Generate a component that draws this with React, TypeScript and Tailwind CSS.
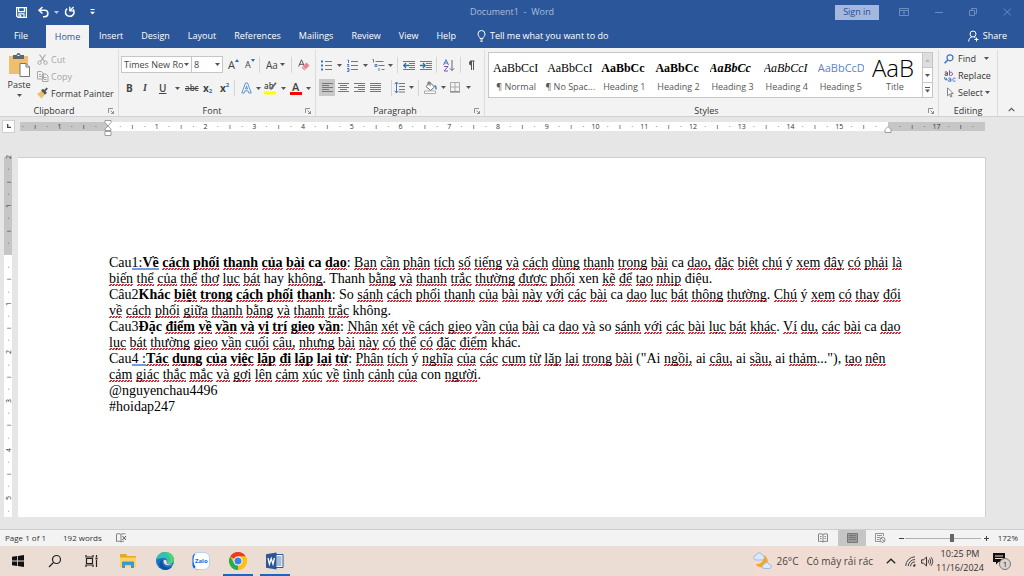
import type { ReactNode } from 'react'
import clsx from 'clsx'

const UI_FONT = "font-['Open_Sans','Noto_Sans',sans-serif]"

/* ---------- small drawing helpers ---------- */

interface IconProps {
  w?: number
  h?: number
  className?: string
  children: ReactNode
}

function Svg({ w = 14, h = 14, className, children }: IconProps) {
  return (
    <svg width={w} height={h} viewBox={`0 0 ${w} ${h}`} fill="none" aria-hidden="true" className={clsx('shrink-0 overflow-visible', className)}>
      {children}
    </svg>
  )
}

function Caret({ className = 'text-[#555]' }: { className?: string }) {
  return (
    <Svg w={5} h={3} className={className}>
      <path d="M0 0h5L2.5 3z" fill="currentColor" />
    </Svg>
  )
}

function Divider() {
  return <span className="h-4 w-px shrink-0 bg-[#d5d5d5]" />
}

/* ---------- title bar and tabs ---------- */

function TitleBar() {
  return (
    <header className="flex h-6 items-center text-white">
      <div className="flex flex-1 items-center">
        <button type="button" aria-label="Save" className="ml-4 w-5">
          <Svg w={11} h={11}>
            <path d="M.6.6h9.8v9.8H2L.6 9z" stroke="currentColor" strokeWidth="1.2" />
            <path d="M2.6 1v3.6h5.8V1M3 10V6.8h5V10M4.6 8v2" stroke="currentColor" strokeWidth="1.2" />
          </Svg>
        </button>
        <button type="button" aria-label="Undo" className="ml-[2px] flex items-center gap-1">
          <Svg w={12} h={12}>
            <path d="M4.5 1 1 4.3l3.5 3.2M1.4 4.3h5.3a3.2 3.2 0 0 1 0 6.4H5" stroke="currentColor" strokeWidth="1.5" />
          </Svg>
          <Caret className="text-[#b8c8e4]" />
        </button>
        <button type="button" aria-label="Repeat" className="ml-[5px]">
          <Svg w={12} h={12}>
            <path d="M3.2 2.6A4.3 4.3 0 1 0 9 3.2" stroke="currentColor" strokeWidth="1.5" />
            <path d="M5.800.8v4h4.400M6.200 4.400 9.600 1" stroke="currentColor" strokeWidth="1.300" />
          </Svg>
        </button>
        <button type="button" aria-label="Customize Quick Access Toolbar" className="ml-[14px]">
          <Svg w={5} h={6}>
            <path d="M.5.5h4" stroke="currentColor" />
            <path d="M0 2.8h5L2.5 5.6z" fill="currentColor" />
          </Svg>
        </button>
      </div>
      <h1 className="text-[9px] whitespace-pre text-[#a9bcdd]">Document1  -  Word</h1>
      <div className="flex flex-1 items-center justify-end text-[#6d8dc2]">
        <button type="button" className="mr-5 h-[15px] w-11 bg-[#a3b8dc] text-[9px] leading-[14px] text-[#1f4e95]">Sign in</button>
        <button type="button" aria-label="Ribbon Display Options" className="w-9">
          <Svg w={10} h={8}>
            <path d="M.5.5h9v7h-9zM.5 2.5h9M5 6.5V3.8M3.7 5 5 3.7 6.3 5" stroke="currentColor" />
          </Svg>
        </button>
        <button type="button" aria-label="Minimize" className="w-[34px]">
          <Svg w={8} h={8}><path d="M0 4.5h8" stroke="currentColor" /></Svg>
        </button>
        <button type="button" aria-label="Restore" className="w-[34px]">
          <Svg w={8} h={8}><path d="M.5 2.5h5v5h-5zM2.5 2.5v-2h5v5h-2" stroke="currentColor" /></Svg>
        </button>
        <button type="button" aria-label="Close" className="mr-3">
          <Svg w={9} h={8}><path d="m.8.5 7 7m0-7-7 7" stroke="currentColor" /></Svg>
        </button>
      </div>
    </header>
  )
}

const tabs = ['Insert', 'Design', 'Layout', 'References', 'Mailings', 'Review', 'View', 'Help']

function TabBar() {
  return (
    <nav className="flex h-6 items-stretch text-[9px] font-medium whitespace-nowrap text-white">
      <button type="button" className="w-[46px] pr-1">File</button>
      <button type="button" className="mt-px mr-px w-[43px] bg-[#f3f3f3] text-[#2b579a]">Home</button>
      {tabs.map((tab) => (
        <button type="button" key={tab} className="px-[9px]">{tab}</button>
      ))}
      <button type="button" className="flex items-center gap-1 pl-3">
        <Svg w={9} h={12}>
          <path d="M3 8.500C3 7 1 6.200 1 4a3.500 3.500 0 0 1 7 0c0 2.200-2 3-2 4.500zM3.200 10h2.600M3.600 11.500h1.800" stroke="currentColor" />
        </Svg>
        Tell me what you want to do
      </button>
      <button type="button" className="mr-[17px] ml-auto flex items-center gap-1">
        <Svg w={11} h={12}>
          <circle cx="5" cy="4" r="3" stroke="currentColor" />
          <path d="M.6 11.500C.8 8.500 2.500 7.300 4 6.800M6 6.800l1.500 1.200M8.500 7.500v4M6.500 9.500h4" stroke="currentColor" />
        </Svg>
        Share
      </button>
    </nav>
  )
}

/* ---------- ribbon ---------- */

interface GroupProps {
  label: string
  launcher?: boolean
  className?: string
  children: ReactNode
}

function Group({ label, launcher = true, className, children }: GroupProps) {
  return (
    <section aria-label={label} className={clsx('mt-[2px] flex flex-col border-r border-[#dcdcdc]', className)}>
      <div className="flex-1">{children}</div>
      <div className="flex h-[11px] items-center text-[9px] leading-[11px] text-[#333]">
        <span className="flex-1 text-center">{label}</span>
        {launcher && (
          <button type="button" aria-label={`${label} settings`} className="mr-1">
            <Svg w={6} h={6}><path d="M.5 5V.5H5M2.500 2.500l3 3M5.500 3v2.500H3" stroke="#777" strokeWidth=".8" /></Svg>
          </button>
        )}
      </div>
    </section>
  )
}

function ClipboardGroup() {
  return (
    <Group label="Clipboard" className="w-[119px]">
      <div className="flex pt-px pl-[7px]">
        <button type="button" className="flex w-6 flex-col items-center pt-[2px] text-[9px] leading-3 text-[#333]">
          <Svg w={22} h={24}>
            <path d="M1 3h19v18H1z" fill="#eebf6c" />
            <path d="M5 2h3.500a2 2 0 0 1 4 0H16v4H5z" fill="#5c6670" />
            <path d="M9.500 2.500h2" stroke="#fff" />
            <path d="M12 10.500h6l3.500 3.500v9.500H12z" fill="#fff" stroke="#777" />
            <path d="M18 10.500V14h3.500" stroke="#777" />
          </Svg>
          <span className="pt-[2px]">Paste</span>
          <span className="pt-[3px]"><Caret /></span>
        </button>
        <div className="ml-[6px] flex flex-col text-[9px] leading-[17px] text-[#a8a8a8]">
          <button type="button" disabled className="flex items-center gap-[3px]">
            <Svg w={11} h={11}>
              <path d="m2.500.5 5 7M8.500.5l-5 7" stroke="currentColor" strokeWidth="1.200" />
              <circle cx="2.500" cy="8.700" r="1.700" stroke="currentColor" />
              <circle cx="8.500" cy="8.700" r="1.700" stroke="currentColor" />
            </Svg>
            Cut
          </button>
          <button type="button" disabled className="flex items-center gap-[2px]">
            <Svg w={12} h={11}>
              <path d="M.5.5h4l2 2v5.500h-6zM2 3.500h2M2 5.500h3M5.500 3h3.500l2 2v5.500H5.500z" fill="#f3f3f3" stroke="currentColor" />
              <path d="M7 6.500h2.500M7 8.500h2.500" stroke="currentColor" />
            </Svg>
            Copy
          </button>
          <button type="button" className="flex items-center gap-[3px] whitespace-nowrap text-[#333]">
            <Svg w={11} h={11}>
              <path d="m0 6 4.500-3L8 6.500 4.500 10.500z" fill="#eebf6c" />
              <path d="m4 2.500 2-1.700 4 4-2 2z" fill="#555" />
              <path d="m7.500 3 2.800-2.800" stroke="#555" strokeWidth="1.800" />
            </Svg>
            Format Painter
          </button>
        </div>
      </div>
    </Group>
  )
}

function Combo({ label, value, className }: { label: string; value: string; className: string }) {
  return (
    <div className={clsx('relative h-[17px] border border-[#c6c6c6] bg-white', className)}>
      <select aria-label={label} defaultValue={value} className="block h-full w-full appearance-none pl-[2px] text-[9px] leading-[14px] text-[#444] outline-none">
        <option>{value}</option>
      </select>
      <span className="pointer-events-none absolute top-[6px] right-[2px]"><Caret /></span>
    </div>
  )
}

function FontGroup() {
  return (
    <Group label="Font" className="w-[197px]">
      <div className="flex items-center pt-[6px] pl-[2px] text-[#444]">
        <Combo label="Font" value="Times New Ro" className="w-[71px]" />
        <Combo label="Font size" value="8" className="-ml-px w-8" />
        <button type="button" aria-label="Increase font size" className="ml-[5px] flex w-[17px] text-[11px] leading-3">
          A<Svg w={4} h={3}><path d="M0 3h4L2 0z" fill="#2b6cb0" /></Svg>
        </button>
        <button type="button" aria-label="Decrease font size" className="flex w-[14px] text-[9px] leading-3">
          A<Svg w={4} h={3}><path d="M0 0h4L2 3z" fill="#2b6cb0" /></Svg>
        </button>
        <Divider />
        <button type="button" aria-label="Change case" className="ml-[6px] flex w-[25px] items-center gap-[2px] text-[10px] leading-3">
          Aa<Caret />
        </button>
        <Divider />
        <button type="button" aria-label="Clear formatting" className="ml-[6px]">
          <Svg w={12} h={12}>
            <path d="M.6 7.500 3.500.8 6 6.500M1.600 5.300h3.600" stroke="#555" />
            <path d="m3.500 8.500 5-5 3 3-5 5z" fill="#e88493" />
            <path d="m4.500 7.500 3 3" stroke="#fff" strokeWidth=".8" />
          </Svg>
        </button>
      </div>
      <div className="flex items-center pt-[7px] pl-[7px] text-[10px] leading-[14px] text-[#444]">
        <button type="button" aria-label="Bold" className="w-[17px] text-left font-bold">B</button>
        <button type="button" aria-label="Italic" className="w-4 text-left font-['Liberation_Serif',serif] font-bold italic">I</button>
        <button type="button" aria-label="Underline" className="flex w-[21px] items-center justify-between font-semibold underline">
          U<Caret />
        </button>
        <button type="button" aria-label="Strikethrough" className="ml-[5px] w-[18px] text-left text-[8px] font-semibold line-through">abc</button>
        <button type="button" aria-label="Subscript" className="flex w-[17px] items-end text-left font-bold">
          x<span className="text-[6px] leading-[8px] text-[#2b6cb0]">2</span>
        </button>
        <button type="button" aria-label="Superscript" className="flex w-[14px] items-start text-left font-bold">
          x<span className="text-[6px] leading-[8px] text-[#2b6cb0]">2</span>
        </button>
        <Divider />
        <button type="button" aria-label="Text effects" className="ml-[6px] flex w-[23px] items-center gap-1">
          <Svg w={11} h={12}>
            <path d="M.8 11 4.500 1h2l3.700 10H7.800l-.7-2.200H3.900L3.200 11zM4.500 7h2L5.500 3.800z" fill="#fff" stroke="#4a86cf" strokeWidth=".9" />
          </Svg>
          <Caret />
        </button>
        <button type="button" aria-label="Text highlight color" className="flex w-[26px] items-center gap-1">
          <Svg w={13} h={13}>
            <text x="0" y="7" fontSize="8" fontWeight="600" fill="#444" fontFamily="Open Sans">ab</text>
            <path d="m12 .8-5.500 6.700" stroke="#666" strokeWidth="1.800" />
            <path d="M0 9.500h12v3H0z" fill="#ffff00" />
          </Svg>
          <Caret />
        </button>
        <button type="button" aria-label="Font color" className="flex items-center gap-1">
          <Svg w={12} h={13}>
            <text x="2" y="9" fontSize="11" fontWeight="600" fill="#444" fontFamily="Open Sans">A</text>
            <path d="M0 10h12v3H0z" fill="#ff0000" />
          </Svg>
          <Caret />
        </button>
      </div>
    </Group>
  )
}

const alignments = [
  { label: 'Align left', d: 'M0 1.500h11M0 3.500h7M0 5.500h11M0 7.500h7M0 9.500h11' },
  { label: 'Center', d: 'M0 1.500h11M2 3.500h7M0 5.500h11M2 7.500h7M0 9.500h11' },
  { label: 'Align right', d: 'M0 1.500h11M4 3.500h7M0 5.500h11M4 7.500h7M0 9.500h11' },
  { label: 'Justify', d: 'M0 1.500h11M0 3.500h11M0 5.500h11M0 7.500h11M0 9.500h11' },
]

function ParagraphGroup() {
  return (
    <Group label="Paragraph" className="w-[169px]">
      <div className="flex items-center pt-[7px] pl-[5px]">
        <button type="button" aria-label="Bullets" className="flex w-[26px] items-center gap-1">
          <Svg w={12} h={13}>
            <path d="M4 2.500h7M4 6.500h7M4 10.500h7" stroke="#777" />
            <path d="M0 1.500h2v2H0zM0 5.500h2v2H0zM0 9.500h2v2H0z" fill="#3f76bb" />
          </Svg>
          <Caret />
        </button>
        <button type="button" aria-label="Numbering" className="flex w-[25px] items-center gap-1">
          <Svg w={12} h={13}>
            <path d="M4 2.500h7M4 6.500h7M4 10.500h7" stroke="#777" />
            <path d="M.5 1h1v3M0 5.500h2L.5 7.500h1.800M0 9.500h2v3H0M.5 11h1.500" stroke="#3f76bb" strokeWidth=".9" />
          </Svg>
          <Caret />
        </button>
        <button type="button" aria-label="Multilevel list" className="flex w-[25px] items-center gap-[2px]">
          <Svg w={14} h={13}>
            <path d="M3.500 2.500h8M6.500 6.500h6M9.500 10.500h3" stroke="#777" />
            <path d="M.5.5h1v3M3 5.500h2v2H3zM7 9v3" stroke="#3f76bb" strokeWidth=".9" />
          </Svg>
          <Caret />
        </button>
        <Divider />
        <button type="button" aria-label="Decrease indent" className="ml-[5px] w-[17px]">
          <Svg w={12} h={11}>
            <path d="M0 1.500h12M6 3.500h6M6 5.500h6M6 7.500h6M0 9.500h12" stroke="#777" />
            <path d="M1 5.500h5M3 3 .8 5.500 3 8" stroke="#2b6cb0" strokeWidth="1.300" />
          </Svg>
        </button>
        <button type="button" aria-label="Increase indent" className="w-4">
          <Svg w={12} h={11}>
            <path d="M0 1.500h12M6 3.500h6M6 5.500h6M6 7.500h6M0 9.500h12" stroke="#777" />
            <path d="M0 5.500h5M3 3l2.200 2.500L3 8" stroke="#2b6cb0" strokeWidth="1.300" />
          </Svg>
        </button>
        <Divider />
        <button type="button" aria-label="Sort" className="ml-[6px] w-[17px]">
          <Svg w={12} h={13}>
            <path d="M.5 6 3 .7 5.500 6M1.300 4h3.400" stroke="#3f76bb" />
            <path d="M1 7.500h4l-4 4.500h4" stroke="#8e4fa8" />
            <path d="M9 1v10.500M6.800 9.300 9 11.500l2.200-2.200" stroke="#666" />
          </Svg>
        </button>
        <Divider />
        <button type="button" aria-label="Show paragraph marks" className="ml-[6px]">
          <Svg w={8} h={11}>
            <path d="M3.500 1h4M4.500 1v9M6.500 1v9" stroke="#555" />
            <path d="M4.500.5a2.500 2.500 0 0 0 0 5z" fill="#555" />
          </Svg>
        </button>
      </div>
      <div className="flex items-center pt-[6px] pl-[3px]">
        {alignments.map(({ label, d }, i) => (
          <button type="button" key={label} aria-label={label} className={clsx('flex h-[17px] w-4 items-center justify-center', i === 0 && 'bg-[#c8c8c8]')}>
            <Svg w={11} h={11}><path d={d} stroke="#777" /></Svg>
          </button>
        ))}
        <span className="w-2" />
        <Divider />
        <button type="button" aria-label="Line spacing" className="ml-[2px] flex w-6 items-center gap-[3px]">
          <Svg w={12} h={13}>
            <path d="M5 2.500h6M5 5.500h6M5 8.500h6M5 11h6" stroke="#777" />
            <path d="M2.500 1v11M.6 3.200 2.500 1l1.900 2.200M.6 9.800 2.500 12l1.900-2.200" stroke="#3f76bb" />
          </Svg>
          <Caret />
        </button>
        <Divider />
        <button type="button" aria-label="Shading" className="ml-[5px] flex w-[26px] items-center gap-1">
          <Svg w={13} h={13}>
            <path d="m2 5.500 4-4 4.500 4.500-4 3.500z" fill="#fff" stroke="#666" />
            <path d="M4 4V1.200h2V5" stroke="#666" />
            <path d="M10.500 4.500c1.500.5 1.800 2 1.500 4" stroke="#3f76bb" strokeWidth="1.300" />
            <path d="M.5 10h11v2.500H.5z" fill="#fff" stroke="#999" strokeWidth=".8" />
          </Svg>
          <Caret />
        </button>
        <button type="button" aria-label="Borders" className="flex items-center gap-[6px]">
          <Svg w={10} h={11}>
            <path d="M.5.5h9v9h-9zM5 .5v9M.5 5h9" stroke="#aaa" />
            <path d="M0 10h10" stroke="#777" />
          </Svg>
          <Caret />
        </button>
      </div>
    </Group>
  )
}

const textStyles = [
  { name: '¶ Normal', sample: 'AaBbCcI', look: "font-['Liberation_Serif',serif] text-[12px] text-black" },
  { name: '¶ No Spac...', sample: 'AaBbCcI', look: "font-['Liberation_Serif',serif] text-[12px] text-black" },
  { name: 'Heading 1', sample: 'AaBbCc', look: "font-['Liberation_Serif',serif] text-[12px] font-bold text-black" },
  { name: 'Heading 2', sample: 'AaBbCc', look: "font-['Liberation_Serif',serif] text-[12px] font-bold text-black" },
  { name: 'Heading 3', sample: 'AaBbCc', look: "font-['Liberation_Serif',serif] text-[12px] font-bold italic text-black" },
  { name: 'Heading 4', sample: 'AaBbCcI', look: "font-['Liberation_Serif',serif] text-[12px] italic text-black" },
  { name: 'Heading 5', sample: 'AaBbCcD', look: 'text-[11px] text-[#5b83cb]' },
  { name: 'Title', sample: 'AaB', look: 'font-light text-[24px] text-black' },
]

function StylesGroup() {
  return (
    <Group label="Styles" className="min-w-0 flex-1">
      <div className="mt-[2px] mr-[5px] ml-[3px] flex h-[46px] border border-[#c6c6c6] bg-white">
        <div className="grid min-w-0 flex-1 grid-cols-8">
          {textStyles.map(({ name, sample, look }) => (
            <button type="button" key={name} className="flex min-w-0 flex-col items-center px-1 pt-[3px]">
              <span className={clsx('flex h-6 w-full items-center justify-start overflow-hidden leading-6 whitespace-nowrap', look)}>{sample}</span>
              <span className="text-[9px] leading-[14px] whitespace-nowrap text-[#555]">{name}</span>
            </button>
          ))}
        </div>
        <div className="flex w-[10px] flex-col divide-y divide-[#c6c6c6] border-l border-[#c6c6c6]">
          <button type="button" aria-label="Previous styles" className="flex flex-1 items-center justify-center bg-[#dedede]">
            <Svg w={5} h={3}><path d="M0 3h5L2.500 0z" fill="#bbb" /></Svg>
          </button>
          <button type="button" aria-label="Next styles" className="flex flex-1 items-center justify-center"><Caret /></button>
          <button type="button" aria-label="More styles" className="flex flex-1 items-center justify-center">
            <Svg w={5} h={6}>
              <path d="M0 .5h5" stroke="#555" />
              <path d="M0 2.500h5L2.500 5.500z" fill="#555" />
            </Svg>
          </button>
        </div>
      </div>
    </Group>
  )
}

function EditingGroup() {
  return (
    <Group label="Editing" launcher={false} className="w-[59px] shrink-0">
      <div className="flex flex-col pl-[5px] text-[9px] leading-[17px] text-[#333]">
        <button type="button" className="flex items-center gap-1">
          <Svg w={10} h={10}>
            <circle cx="6" cy="3.800" r="3" stroke="#3f76bb" strokeWidth="1.200" />
            <path d="M3.800 6 .6 9.300" stroke="#3f76bb" strokeWidth="1.600" />
          </Svg>
          Find
          <span className="pl-1"><Caret /></span>
        </button>
        <button type="button" className="flex items-center gap-[2px]">
          <Svg w={12} h={12}>
            <g strokeWidth="1">
              <path d="M.8 2.300c1.500-.8 2.700-.3 2.700.8v2.400M3.500 3.800C2 3.500.8 4 .8 4.700s1.500 1.200 2.700 0" stroke="#444" />
              <path d="M5.500.3v5.200M5.500 3c1-1.300 3-.9 3 .9S6.500 6 5.500 4.800" stroke="#8e4fa8" />
              <path d="M4.300 8.300c1.400-.8 2.600-.3 2.600.7v2.500M6.900 9.800c-1.400-.3-2.600.2-2.600.9s1.400 1.100 2.600 0M11.500 8.500c-1.200-.9-2.700-.2-2.700 1.200s1.500 2.200 2.700 1.200" stroke="#3f76bb" />
              <path d="M.8 7v2.300h2.200M2 8.200l1.200 1.100L2 10.500" stroke="#3f76bb" />
            </g>
          </Svg>
          Replace
        </button>
        <button type="button" className="flex items-center gap-[2px]">
          <Svg w={12} h={11}>
            <path d="M3.500.8v8l2-1.800 1.300 3 1.200-.6L6.700 6.600h2.500z" fill="#fff" stroke="#777" strokeWidth=".9" />
          </Svg>
          Select
          <Caret />
        </button>
      </div>
    </Group>
  )
}

function Ribbon() {
  return (
    <div className="flex h-[69px] border-b border-[#d2d2d2] bg-[#f3f3f3]">
      <ClipboardGroup />
      <FontGroup />
      <ParagraphGroup />
      <StylesGroup />
      <EditingGroup />
      <button type="button" aria-label="Collapse the Ribbon" className="flex w-[26px] items-end justify-center pb-1">
        <Svg w={7} h={5}><path d="M.7 4.200 3.500 1.400l2.800 2.800" stroke="#555" strokeWidth="1.200" /></Svg>
      </button>
    </div>
  )
}

/* ---------- rulers ---------- */

const DOT = '·'
const BAR = 'ı'

// quarter-unit marks: dot, bar, dot, number
function marks(from: number, to: number) {
  const out: string[] = []
  for (let n = from; n <= to; n++) out.push(DOT, BAR, DOT, String(n))
  return out
}

function HMarks({ items, atEnd = true }: { items: string[]; atEnd?: boolean }) {
  return (
    <>
      {items.map((m, i) => (
        <span key={i} className={clsx('flex flex-1', atEnd ? 'justify-end' : 'justify-start')}>
          <span className="flex w-0 justify-center">{m}</span>
        </span>
      ))}
    </>
  )
}

function HorizontalRuler() {
  return (
    <div className="flex h-[18px] items-center pr-[39px] text-[7px] leading-[9px] font-medium text-[#333]">
      <button type="button" aria-label="Tab selector" className="mr-[5px] ml-[2px] flex size-[13px] items-center justify-center border border-[#cfcfcf] bg-[#fdfdfd]">
        <Svg w={4} h={4}><path d="M.7 0v3.300H4" stroke="#444" strokeWidth="1.300" /></Svg>
      </button>
      <div className="flex h-[9px] w-[88px] bg-[#c6c6c6] pl-[3px]">
        <HMarks items={[DOT, BAR, DOT, '1', DOT, BAR, DOT]} atEnd={false} />
      </div>
      <div className="relative flex h-[9px] flex-[780] bg-white">
        <HMarks items={[...marks(1, 15), DOT, BAR, DOT, '']} />
        <Svg w={8} h={16} className="absolute -top-[2px] -left-1">
          <path d="M1 .5h6v2L4 6 1 2.500zM4 6l3 3v1.500H1V9zM1 11.500h6v4H1z" fill="#fff" stroke="#888" strokeWidth=".8" />
        </Svg>
        <Svg w={8} h={7} className="absolute -right-1 -bottom-[2px]">
          <path d="m4 .5 3 3v3H1v-3z" fill="#fff" stroke="#888" strokeWidth=".8" />
        </Svg>
      </div>
      <div className="flex h-[9px] flex-[97] bg-[#c6c6c6]">
        <HMarks items={[DOT, BAR, DOT, '17', DOT, BAR, DOT, '']} />
      </div>
    </div>
  )
}

function VMarks({ items }: { items: string[] }) {
  return (
    <>
      {items.map((m, i) => (
        <span key={i} className="flex h-3 shrink-0 items-start justify-center">
          <span className="flex h-0 -rotate-90 items-center">{m}</span>
        </span>
      ))}
    </>
  )
}

function VerticalRuler() {
  return (
    <div className="ml-1 flex w-2 flex-col text-[7px] leading-[9px] font-medium text-[#333]">
      <div className="flex h-[98px] shrink-0 flex-col justify-between bg-[#c6c6c6]">
        <VMarks items={['2', DOT, BAR, DOT, '1', DOT, BAR, DOT]} />
      </div>
      <div className="min-h-0 flex-1 overflow-hidden bg-white">
        <div className="flex h-[292px] flex-col justify-between">
          <VMarks items={['', ...marks(1, 5), DOT, BAR, DOT]} />
        </div>
      </div>
    </div>
  )
}

/* ---------- document ---------- */

const SQUIGGLE =
  'bg-[conic-gradient(#e8202a_25%,transparent_0_50%,#e8202a_0_75%,transparent_0)] bg-[length:3px_2px] bg-bottom-left bg-repeat-x'

// Words are spell-check flagged unless they start with "^".
function Words({ text }: { text: string }) {
  return (
    <>
      {text.split(' ').map((token, i) => {
        const plain = token.startsWith('^')
        const tail = plain ? '' : (token.match(/\.+"?\)?,?$/)?.[0] ?? '')
        const word = plain ? token.slice(1) : token.slice(0, token.length - tail.length)
        return (
          <span key={i}>
            {i > 0 && ' '}
            {plain ? word : <span className={SQUIGGLE}>{word}</span>}
            {tail}
          </span>
        )
      })}
    </>
  )
}

function Grammar({ children }: { children: ReactNode }) {
  return (
    <span className="bg-[linear-gradient(#6f9be6,#6f9be6)] bg-[length:100%_2px] bg-bottom-left bg-no-repeat">
      {children}
    </span>
  )
}

function Document() {
  return (
    <article className="mr-[38px] ml-[6px] flex-1 overflow-hidden border-t border-r border-[#cfcfcf] bg-white pt-[97px] pl-[91px] font-['Liberation_Serif',serif] text-[14px] leading-4 whitespace-nowrap text-black">
      <p>
        Cau<Grammar>1:<b>Về</b></Grammar> <b><Words text="cách phối thanh của bài ^ca dao" /></b>: <Words text="Bạn cần phân tích số tiếng và cách dùng thanh trong bài ^ca dao, đặc biệt chú ^ý xem đây có phải là" />
        <br />
        <Words text="biến thể của thể thơ lục bát ^hay không. ^Thanh bằng và thanh trắc thường được phối ^xen kẽ để tạo nhịp ^điệu." />
      </p>
      <p>
        Câu2<b><Words text="^Khác biệt trong cách phối thanh" /></b>: <Words text="^So sánh cách phối thanh của bài này với các bài ^ca dao lục bát thông thường. Chú ^ý xem có thay đổi" />
        <br />
        <Words text="về cách phối giữa thanh bằng và thanh trắc ^không." />
      </p>
      <p>
        Cau3<b><Words text="^Đặc điểm về vần và vị trí gieo vần" /></b>: <Words text="Nhận xét về cách gieo vần của bài ^ca dao và ^so sánh với các bài lục bát khác. Ví dụ, các bài ^ca dao" />
        <br />
        <Words text="lục bát thường gieo vần cuối câu, nhưng bài này có thể có đặc điểm ^khác." />
      </p>
      <p>
        Cau<Grammar>4 :</Grammar><b><Words text="Tác dụng của việc lặp đi lặp lại từ" /></b>: <Words text={'Phân tích ^ý nghĩa của các cụm từ lặp lại trong bài ^("Ai ngồi, ^ai câu, ^ai sầu, ^ai thảm..."), tạo nên'} />
        <br />
        <Words text="cảm giác thắc mắc và gợi lên cảm xúc về tình cảnh của ^con người." />
      </p>
      <p>@nguyenchau4496</p>
      <p>#hoidap247</p>
    </article>
  )
}

/* ---------- status bar ---------- */

function StatusBar() {
  return (
    <footer className="flex h-[17px] items-center border-t border-[#cdcdcd] bg-[#f3f3f3] text-[8px] text-[#333]">
      <span className="pl-[5px]">Page 1 of 1</span>
      <span className="pl-[17px]">192 words</span>
      <button type="button" aria-label="Proofing errors" className="ml-[14px]">
        <Svg w={11} h={10}>
          <path d="M5 1.500C4 .5 2 .5.5 1v7.500c1.500-.5 3.500-.5 4.500.5zM5 1.500C6 .5 8 .5 9.500 1M5 9c1-.7 2-.9 3-.8" stroke="#666" strokeWidth=".8" />
          <path d="m6.500 3 3.500 4m0-4L6.500 7" stroke="#555" />
        </Svg>
      </button>
      <div className="ml-auto flex h-full items-center">
        <button type="button" aria-label="Read Mode" className="mr-[10px]">
          <Svg w={10} h={10}>
            <path d="M5 1.500C4 .7 2 .7.500 1v7.500c1.500-.3 3.500-.3 4.500.5 1-.8 3-.8 4.500-.5V1C8 .7 6 .7 5 1.500zM5 1.500V9M2 3.500h1.500M2 5.500h1.500M6.500 3.500H8M6.500 5.500H8" stroke="#777" strokeWidth=".9" />
          </Svg>
        </button>
        <button type="button" aria-label="Print Layout" className="flex h-full w-[28px] items-center justify-center bg-[#c6c6c6]">
          <Svg w={11} h={10}>
            <path d="M.5.5h10v9H.5z" fill="#999" stroke="#777" />
            <path d="M2 2.500h7M2 4.500h7M2 6.500h7" stroke="#777" />
          </Svg>
        </button>
        <button type="button" aria-label="Web Layout" className="mx-[9px]">
          <Svg w={11} h={10}>
            <path d="M5 8.500H.5v-8h8V3M2 2.500h5M2 4.500h3M2 6.500h2" stroke="#888" strokeWidth=".9" />
            <circle cx="7.500" cy="6.800" r="2.500" fill="#f3f3f3" stroke="#777" strokeWidth=".9" />
            <path d="m6 5 3.200 3.500" stroke="#777" strokeWidth=".8" />
          </Svg>
        </button>
        <button type="button" aria-label="Zoom out" className="mr-px ml-1"><Svg w={5} h={5}><path d="M0 2.500h5" stroke="#444" /></Svg></button>
        <input
          type="range"
          aria-label="Zoom"
          min={0}
          max={100}
          defaultValue={62}
          className="h-[9px] w-[76px] appearance-none bg-transparent bg-[linear-gradient(#b0b0b0,#b0b0b0)] bg-[length:100%_1px] bg-center bg-no-repeat [&::-webkit-slider-thumb]:h-[8px] [&::-webkit-slider-thumb]:w-1 [&::-webkit-slider-thumb]:appearance-none [&::-webkit-slider-thumb]:bg-[#666]"
        />
        <button type="button" aria-label="Zoom in" className="ml-[3px]"><Svg w={5} h={5}><path d="M0 2.500h5M2.500 0v5" stroke="#444" /></Svg></button>
        <button type="button" className="w-[35px] pr-[6px] text-right">172%</button>
      </div>
    </footer>
  )
}

/* ---------- taskbar ---------- */

const apps = [
  {
    name: 'Start',
    icon: (
      <Svg w={14} h={14}>
        <path d="M1 2.800 6 2v4.600H1zM6.800 1.900 13 1v5.600H6.800zM1 7.400h5V12l-5-.8zM6.800 7.400H13V13l-6.200-.9z" fill="#111" />
      </Svg>
    ),
  },
  {
    name: 'Search',
    icon: (
      <Svg w={14} h={14}>
        <circle cx="8.500" cy="5.500" r="4" stroke="#222" strokeWidth="1.200" />
        <path d="M5.600 8.400 1 13" stroke="#222" strokeWidth="1.300" />
      </Svg>
    ),
  },
  {
    name: 'Task View',
    icon: (
      <Svg w={14} h={14}>
        <path d="M1 1v2h7V1M1 13v-2h7v2M1.500 4.500h6v5h-6zM11.500 1v2M11.500 6v7" stroke="#222" strokeWidth="1.200" />
        <path d="M10.500 3.500h2v2h-2z" fill="#222" />
      </Svg>
    ),
  },
  {
    name: 'File Explorer',
    icon: (
      <Svg w={17} h={16}>
        <path d="M0 2a1 1 0 0 1 1-1h5l1.500 2H15a1 1 0 0 1 1 1v10H0z" fill="#e9a820" />
        <path d="M0 4.500h16V13a1 1 0 0 1-1 1H1a1 1 0 0 1-1-1z" fill="#fcd462" />
        <path d="M3 8.500h10a1 1 0 0 1 1 1V15h-3v-3H5v3H2V9.500a1 1 0 0 1 1-1z" fill="#3f95d8" />
      </Svg>
    ),
  },
  {
    name: 'Edge',
    icon: (
      <Svg w={18} h={18}>
        <circle cx="9" cy="9" r="9" fill="#1673c6" />
        <path d="M.3 7.500C1 3 4.700 0 9 0c5 0 9 3.500 9 7.800 0 2.500-2 4.200-4.500 4.200-1.800 0-3-.6-2.600-1.400 1.300-2.200-.4-4.600-3.400-4.600C4 6 1 6.800.3 7.500z" fill="#35c1b1" />
        <path d="M9 0c5 0 9 3.500 9 7.800 0 2.500-2 4.200-4.500 4.200-1.200 0-2.200-.3-2.500-.8 4-1 4.500-6.200-2-11.200z" fill="#5bd75a" opacity=".7" />
        <path d="M7 8c-2 3 .5 7.500 5 7.500 1.800 0 3.500-.6 4.500-1.600C15 16.500 12.300 18 9 18 5 18 3 14 3.500 11 4 8.800 5.500 8 7 8z" fill="#0c4fa0" />
        <path d="M7.800 8.300c-1 1.800.5 4.600 3.700 5 2 .2 4-.3 5-1-1.500.4-6.500.5-5.700-1.700C11.500 8.800 9 7 7.800 8.300z" fill="#ecddd5" />
      </Svg>
    ),
  },
  {
    name: 'Zalo',
    icon: (
      <Svg w={18} h={18}>
        <rect x=".5" y=".5" width="17" height="17" rx="5.500" fill="#fff" stroke="#a9c8f8" strokeWidth=".8" />
        <path d="M3.500 1.500C.8 5 1 12 3.500 14.500c0 1-.7 1.500-1.500 1.800 1.500 1.200 4 1.200 8 1.200H6C2.500 17.500.5 16 .5 12.500V6C.5 3.500 1.500 2 3.500 1.500z" fill="#1667e8" />
        <text x="9.300" y="11.300" textAnchor="middle" fontSize="6" fontWeight="700" fill="#1667e8" fontFamily="Open Sans">Zalo</text>
      </Svg>
    ),
  },
  {
    name: 'Chrome',
    running: true,
    icon: (
      <Svg w={18} h={18}>
        <circle cx="9" cy="9" r="9" fill="#fbc116" />
        <path d="M9 9 1.200 4.500A9 9 0 0 1 16.800 4.500H9z" fill="#e33b2e" />
        <path d="m9 9 0 9A9 9 0 0 1 1.200 4.500L5.100 11.300z" fill="#2da94f" />
        <path d="m12.900 11.300-4 6.700H9A9 9 0 0 0 16.800 4.500H9z" fill="#fbc116" />
        <circle cx="9" cy="9" r="4.500" fill="#fff" />
        <circle cx="9" cy="9" r="3.500" fill="#3f7ee8" />
      </Svg>
    ),
  },
  {
    name: 'Word',
    running: true,
    icon: (
      <Svg w={18} h={18}>
        <path d="M9 2.500h8v13H9z" fill="#fff" stroke="#2b579a" />
        <path d="M10.500 5h5M10.500 7h5M10.500 9h5M10.500 11h5M10.500 13h5" stroke="#2b579a" strokeWidth=".8" />
        <path d="M0 2.300 10.500.5v17L0 15.700z" fill="#2b579a" />
        <path d="m2 6 1.400 6L5.200 6.500 7 12l1.400-6" stroke="#fff" strokeWidth="1.300" />
      </Svg>
    ),
  },
]

function Taskbar() {
  return (
    <div className="flex h-[30px] items-stretch bg-[#ecddd4] text-[#333]">
      <div className="grid w-[293px] grid-cols-8">
        {apps.map(({ name, icon, running }) => (
          <button type="button" key={name} aria-label={name} className="flex flex-col items-center">
            <span className="flex flex-1 items-center">{icon}</span>
            <span className={clsx('-mt-[2px] h-[2px] w-[30px]', running && 'bg-[#1668c1]')} />
          </button>
        ))}
      </div>
      <div className="ml-auto flex items-center bg-[#f1dcd3]">
        <button type="button" className="flex items-center text-[10px] whitespace-nowrap text-[#444]">
          <Svg w={19} h={18} className="mr-1">
            <path d="M11 3a6.500 6.500 0 1 1-8.500 9A7.500 7.500 0 0 0 11 3z" fill="#f5a623" />
            <path d="M3 8a2.300 2.300 0 0 1 0-4.600 3.200 3.200 0 0 1 6.200-.3A2.500 2.500 0 0 1 9.500 8z" fill="#dbe9fa" stroke="#8fb3e0" strokeWidth=".8" />
            <path d="M11 16.500a2 2 0 0 1 0-4 2.700 2.700 0 0 1 5.200 0 2 2 0 0 1 .3 4z" fill="#dbe9fa" stroke="#8fb3e0" strokeWidth=".8" />
          </Svg>
          26°C
          <span className="pl-2">Có mây rải rác</span>
        </button>
        <button type="button" aria-label="Show hidden icons" className="ml-[13px]">
          <Svg w={10} h={6}><path d="m.8 5.200 4.200-4 4.200 4" stroke="#222" strokeWidth="1.200" /></Svg>
        </button>
        <button type="button" aria-label="Network" className="ml-[9px]">
          <Svg w={11} h={11}>
            <path d="M.7 10A9.500 9.500 0 0 1 10 .8M3.200 10.200A7 7 0 0 1 10 3.500M5.600 10.300A4.500 4.500 0 0 1 10 6" stroke="#444" />
            <path d="M8 10.500A2.500 2.500 0 0 1 10.300 8v2.500z" fill="#222" />
          </Svg>
        </button>
        <button type="button" aria-label="Volume" className="ml-[5px]">
          <Svg w={12} h={11}>
            <path d="M.6 3.800h2L5.500 1v9L2.600 7.200h-2zM7 3.800c.8 1 .8 2.400 0 3.400M8.500 2.500c1.500 1.800 1.500 4.200 0 6M10 1.200c2.200 2.600 2.200 6 0 8.600" stroke="#222" strokeWidth=".9" />
          </Svg>
        </button>
        <button type="button" className="w-[54px] text-center text-[9px] leading-[14px]">
          10:25 PM
          <br />
          11/16/2024
        </button>
        <button type="button" aria-label="1 new notification" className="relative mr-[13px] ml-[6px]">
          <Svg w={18} h={18}>
            <path d="M0 1h12v9H5.500L3 12.500V10H0z" fill="#111" />
            <path d="M2 4h8M2 6.500h8" stroke="#f1dcd3" />
          </Svg>
          <span className="absolute right-0 bottom-0 flex size-[12px] items-center justify-center rounded-full border border-[#777] bg-[#ddd4ce] text-[8px] leading-[10px] text-[#222]">1</span>
        </button>
      </div>
    </div>
  )
}

export default function App() {
  return (
    <div className={clsx('flex h-screen flex-col overflow-hidden bg-[#e6e6e6]', UI_FONT)}>
      <div className="bg-[#2b579a]">
        <TitleBar />
        <TabBar />
      </div>
      <Ribbon />
      <main className="flex min-h-0 flex-1 flex-col">
        <HorizontalRuler />
        <div className="mt-[22px] mb-3 flex min-h-0 flex-1 items-stretch">
          <VerticalRuler />
          <Document />
        </div>
      </main>
      <StatusBar />
      <Taskbar />
    </div>
  )
}
